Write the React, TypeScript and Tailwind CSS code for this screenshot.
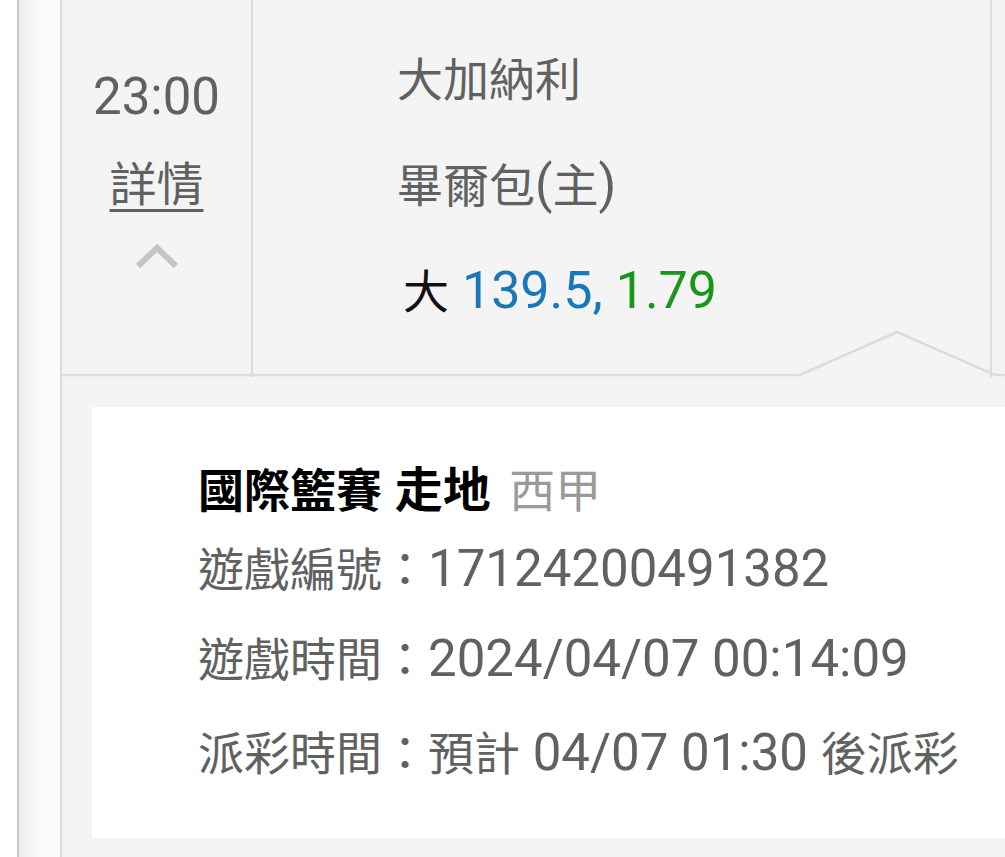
import type { ReactNode } from "react";

const font = { fontFamily: '"Roboto", "Noto Sans CJK TC", sans-serif' };

// latin glyphs run a bit larger than the CJK ones in the original
const L = ({ children }: { children: ReactNode }) => <span className="text-[51px]">{children}</span>;

const BetDetail = () => {
  return (
    <div className="flex-1 flex flex-col bg-[#f4f4f4]">
      <div className="relative flex h-[377px]">
        <div className="w-[191px] flex flex-col items-center pt-[69px] border-r-2 border-[#dcdcdc]">
          <div className="text-[51px] leading-[56px] text-[#616161]">23:00</div>
          <div className="mt-[32px] text-[47px] leading-[56px] text-[#616161] underline underline-offset-[8px] decoration-[3px]">
            詳情
          </div>
          <svg className="mt-[30px]" width="44" height="26" viewBox="0 0 44 26">
            <polyline points="3,23 22,5 41,23" fill="none" stroke="#c4c4c4" strokeWidth="6" />
          </svg>
        </div>
        <div className="w-[739px] flex flex-col gap-[49px] pl-[144px] pt-[52px] border-r-2 border-[#dcdcdc] pb-[4px]">
          <div className="text-[46px] leading-[56px] text-[#616161]">大加納利</div>
          <div className="text-[46px] leading-[56px] text-[#616161]">
            畢爾包<L>(</L>主<L>)</L>
          </div>
          <div className="text-[46px] leading-[56px] pl-[6px]">
            <span className="text-[#111]">大</span>
            <span className="text-[52px]">
              {" "}
              <span className="text-[#1a78b8]">139.5,</span> <span className="text-[#1a961a]">1.79</span>
            </span>
          </div>
        </div>
        <svg className="absolute left-0 bottom-0" width="943" height="46" viewBox="0 0 943 46">
          <polyline
            points="0,44 738,44 835,1 933,44 943,44"
            fill="none"
            stroke="#dcdcdc"
            strokeWidth="2.5"
          />
        </svg>
      </div>
      <div className="pt-[30px] pl-[30px] pb-[19px]">
        <div className="bg-white h-[431px] pl-[106px] pt-[53px]">
          <div className="text-[46px] leading-[60px]">
            <span className="font-bold text-black">
              國際籃賽<L> </L>
              <span className="text-[48px]">走地</span>
            </span>
            <L> </L>
            <span className="ml-[6px] text-[#9a9a9a]">西甲</span>
          </div>
          <div className="mt-[18px] text-[46px] leading-[60px] text-[#616161]">
            遊戲編號：<L>17124200491382</L>
          </div>
          <div className="mt-[29px] text-[46px] leading-[60px] text-[#616161]">
            遊戲時間：<L>2024/04/07 00:14:09</L>
          </div>
          <div className="mt-[33px] text-[46px] leading-[60px] text-[#616161]">
            派彩時間：預計<L> 04/07 01:30 </L>後派彩
          </div>
        </div>
      </div>
    </div>
  );
};

export default function App() {
  return (
    <div className="w-[1005px] h-[857px] overflow-hidden flex bg-white" style={font}>
      <div className="w-[17px] bg-white" />
      <div className="w-[2px] bg-[#c4c4c4]" />
      <div className="w-[41px] bg-gradient-to-r from-[#ececec] via-[#fafafa] to-[#fbfbfb]" />
      <div className="w-[2px] bg-[#dcdcdc]" />
      <BetDetail />
    </div>
  );
}
